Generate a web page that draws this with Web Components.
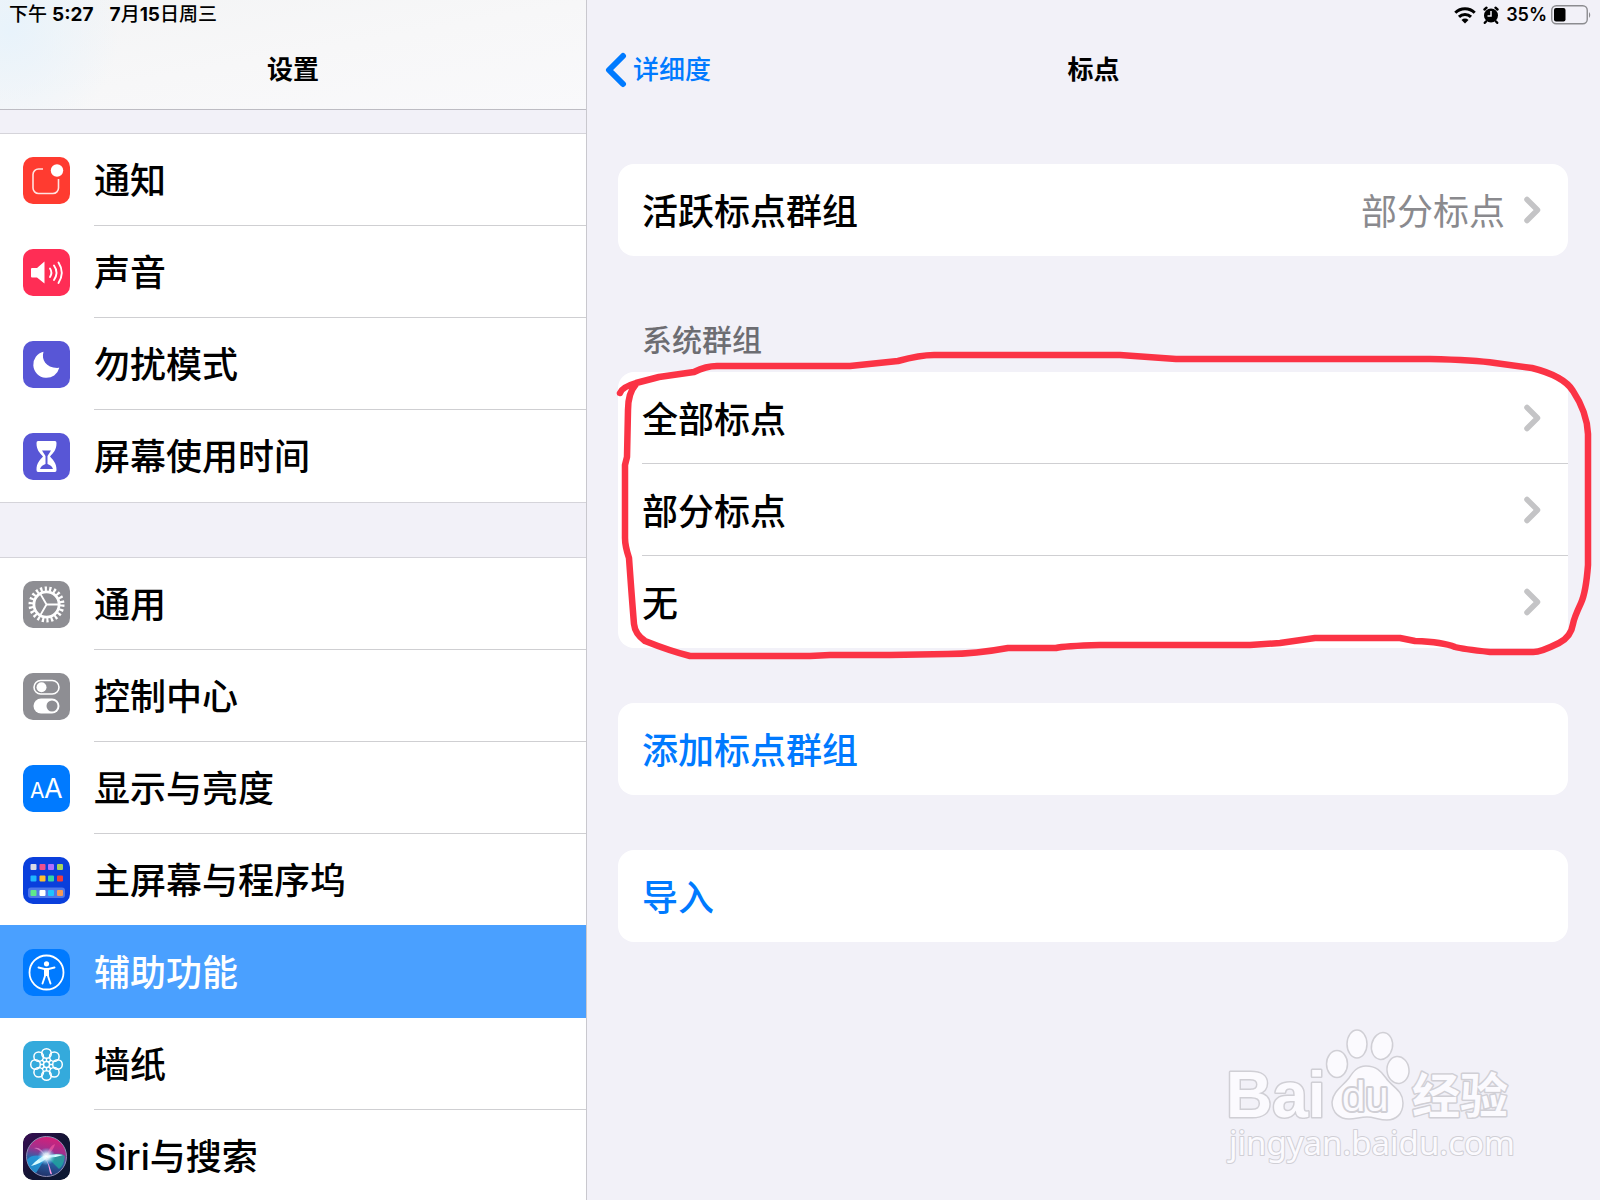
<!DOCTYPE html>
<html lang="zh-CN">
<head>
<meta charset="utf-8">
<meta name="viewport" content="width=device-width, initial-scale=1">
<title>设置</title>
<style>
  body {
    margin: 0;
    background: #f2f1f8;
    color: #000;
    font-family: Inter, "Noto Sans CJK SC", sans-serif;
    font-weight: 500;
  }
</style>
</head>
<body>
<settings-shell>
  <nav-header slot="side" class="side" tinted>
    <span slot="status">下午 <b>5:27</b></span>
    <span slot="status"><b>7</b>月<b>15</b>日周三</span>
    设置
  </nav-header>

  <menu-group slot="side">
    <menu-item label="通知" color="#ff3b30">
      <svg viewBox="0 0 47 47"><path d="M20 12h-4.500a5.500 5.500 0 0 0-5.500 5.500v13.500a5.500 5.500 0 0 0 5.500 5.500h14.500a5.500 5.500 0 0 0 5.500-5.500v-9" fill="none" stroke="#ffe3e0" stroke-width="1.600"/><circle cx="34" cy="13.500" r="6.200" fill="#fff"/></svg>
    </menu-item>
    <menu-item label="声音" color="#ff2d55">
      <svg viewBox="0 0 47 47"><path d="M9 19h5l7.500-6.500v22L14 28.500H9q-1 0-1-1v-7.500q0-1 1-1z" fill="#fff"/><g fill="none" stroke="#fff" stroke-width="1.900" stroke-linecap="round"><path d="M27 19.500q2.800 4.200 0 8.500"/><path d="M31 16.500q5 7 0 14.500"/><path d="M35.500 13.500q6.500 10 0 20.500"/></g></svg>
    </menu-item>
    <menu-item label="勿扰模式" color="#5856d6">
      <svg viewBox="0 0 47 47"><path d="M20.500 10.800c-2.500 8.500 3 17 15.800 16A13.200 13.200 0 1 1 20.500 10.800z" fill="#fff"/></svg>
    </menu-item>
    <menu-item label="屏幕使用时间" color="#5856d6">
      <svg viewBox="0 0 47 47"><path d="M15 8h17q1.500 0 1.500 2c0 7-3 9.500-6.500 13.500 3.500 4 6.500 6.500 6.500 13.500q0 2-1.500 2H15q-1.500 0-1.500-2c0-7 3-9.500 6.500-13.500-3.500-4-6.500-6.500-6.500-13.500q0-2 1.500-2z" fill="#fff"/><path d="M19 17.500h9l-3.500 5.500v8q4.500 1.500 5.500 5h-13q1-3.500 5.500-5v-8z" fill="#5856d6"/></svg>
    </menu-item>
  </menu-group>

  <menu-group slot="side" spaced>
    <menu-item label="通用" color="#8e8e93">
      <svg viewBox="0 0 47 47" fill="none" stroke="#fff"><circle cx="23.500" cy="23.500" r="15.700" stroke-width="4.600" stroke-dasharray="2.200 2.284"/><circle cx="23.500" cy="23.500" r="12.600" stroke-width="2.800"/><path d="M23.500 23.500h12M23.500 23.500l-6-10.400M23.500 23.500l-6 10.400" stroke-width="1.900"/></svg>
    </menu-item>
    <menu-item label="控制中心" color="#8e8e93">
      <svg viewBox="0 0 47 47"><rect x="11" y="7.500" width="25" height="13.500" rx="6.750" fill="none" stroke="#fff" stroke-width="1.600"/><circle cx="18.500" cy="14.300" r="5" fill="#fff"/><rect x="10.500" y="25.500" width="26" height="15" rx="7.500" fill="#fff"/><circle cx="29" cy="33" r="5.500" fill="#8e8e93"/></svg>
    </menu-item>
    <menu-item label="显示与亮度" color="#007aff">
      <svg viewBox="0 0 47 47" fill="#fff" font-family="Inter, sans-serif" font-weight="400"><text x="7" y="33" font-size="21">A</text><text x="21" y="33" font-size="27">A</text></svg>
    </menu-item>
    <menu-item label="主屏幕与程序坞" color="#0a3fdc" plain>
      <svg viewBox="0 0 47 47"><rect x="5" y="30.500" width="37" height="10.500" rx="3" fill="#4f78e8"/>
        <g><rect x="7.500" y="7" width="6" height="6" rx="1" fill="#d9dbe6"/><rect x="16.500" y="7" width="6" height="6" rx="1" fill="#f0508c"/><rect x="25" y="7" width="6" height="6" rx="1" fill="#b070ff"/><rect x="34" y="7" width="6" height="6" rx="1" fill="#a5d65a"/>
        <rect x="7.500" y="18.500" width="6" height="6" rx="1" fill="#1fb6ff"/><rect x="16.500" y="18.500" width="6" height="6" rx="1" fill="#ffc02e"/><rect x="25" y="18.500" width="6" height="6" rx="1" fill="#33d6a5"/><rect x="34" y="18.500" width="6" height="6" rx="1" fill="#f23c3c"/>
        <rect x="7.500" y="33" width="6" height="6" rx="1" fill="#5fe88a"/><rect x="16.500" y="33" width="6" height="6" rx="1" fill="#fff"/><rect x="25" y="33" width="6" height="6" rx="1" fill="#1fc3ff"/><rect x="34" y="33" width="6" height="6" rx="1" fill="#f79a55"/></g></svg>
    </menu-item>
    <menu-item label="辅助功能" color="#007aff" selected>
      <svg viewBox="0 0 47 47"><circle cx="23.500" cy="23.500" r="17" fill="none" stroke="#fff" stroke-width="1.800"/><circle cx="23.500" cy="14.800" r="2.600" fill="#fff"/><path d="M15.500 18.500l6 1.500h4l6-1.500M22 21v6l-2.500 7.500M25 21v6l2.500 7.500" fill="none" stroke="#fff" stroke-width="1.900" stroke-linecap="round"/><path d="M21 19.500h5v7.500h-5z" fill="#fff"/></svg>
    </menu-item>
    <menu-item label="墙纸" color="#34aadc">
      <svg viewBox="0 0 47 47" fill="none" stroke="#fff" stroke-width="1.500"><circle cx="23.500" cy="12.500" r="4.800"/><circle cx="31.300" cy="15.700" r="4.800"/><circle cx="34.500" cy="23.500" r="4.800"/><circle cx="31.300" cy="31.300" r="4.800"/><circle cx="23.500" cy="34.500" r="4.800"/><circle cx="15.700" cy="31.300" r="4.800"/><circle cx="12.500" cy="23.500" r="4.800"/><circle cx="15.700" cy="15.700" r="4.800"/><circle cx="23.500" cy="23.500" r="3"/><path d="M23.500 20.500v-3.200M23.500 26.500v3.200M20.500 23.500h-3.200M26.500 23.500h3.200M21.400 21.400l-2.300-2.300M25.600 25.600l2.300 2.300M25.600 21.400l2.300-2.300M21.400 25.600l-2.300 2.300"/></svg>
    </menu-item>
    <menu-item label="Siri与搜索" color="#17132f">
      <svg viewBox="0 0 47 47">
        <defs>
          <linearGradient id="bg" x2="1" y2="1"><stop offset="0" stop-color="#3a0d55"/><stop offset=".5" stop-color="#131433"/><stop offset="1" stop-color="#0c1a33"/></linearGradient>
          <linearGradient id="orb" x1=".6" y1="0" x2=".4" y2="1"><stop offset="0" stop-color="#d81f78"/><stop offset=".35" stop-color="#a0308e"/><stop offset=".6" stop-color="#2a64a8"/><stop offset="1" stop-color="#203068"/></linearGradient>
          <radialGradient id="glow"><stop offset="0" stop-color="#fff"/><stop offset=".35" stop-color="#e4faff" stop-opacity=".85"/><stop offset="1" stop-color="#59c8ff" stop-opacity="0"/></radialGradient>
        </defs>
        <rect width="47" height="47" rx="10" fill="url(#bg)"/>
        <circle cx="23.500" cy="23.500" r="20" fill="url(#orb)" stroke="#8f8fb5"/>
        <path d="M23 24Q9 20 4 27q2 10 9 13z" fill="#22a9e8" opacity=".7"/>
        <path d="M24 24q12-6 18-1-1 9-6 13z" fill="#1fae9d" opacity=".75"/>
        <path d="M23 24Q18 13 11 15q7 2 12 9z" fill="#f09bd8" opacity=".6"/>
        <path d="M23 24q3-11 9-13-1 6-9 13z" fill="#ff5fa5" opacity=".6"/>
        <path d="M22 24q5 8 7 17-1 1-2-1-1-8-5-16z" fill="#ff9ae6"/>
        <path d="M23 22Q15 25 8 33q9-2 16-8zM23 23q9-3 17-1-8 3-17 3z" fill="#d4fbff"/>
        <circle cx="23.500" cy="23.500" r="9" fill="url(#glow)"/>
      </svg>
    </menu-item>
  </menu-group>

  <nav-header back="详细度">
    <status-icons slot="status"></status-icons>
    标点
  </nav-header>

  <card-list>
    <setting-card>
      <setting-row label="活跃标点群组" value="部分标点" arrow></setting-row>
    </setting-card>
    <setting-card heading="系统群组">
      <setting-row label="全部标点" arrow line></setting-row>
      <setting-row label="部分标点" arrow line></setting-row>
      <setting-row label="无" arrow></setting-row>
      <pen-mark slot="over"></pen-mark>
    </setting-card>
    <setting-card>
      <setting-row label="添加标点群组" action></setting-row>
    </setting-card>
    <setting-card>
      <setting-row label="导入" action></setting-row>
    </setting-card>
  </card-list>

  <site-watermark slot="mark"></site-watermark>
</settings-shell>

<script>
/* base: shadow root with the element's own markup */
class BaseElement extends HTMLElement {
  constructor() {
    super();
    this.attachShadow({ mode: 'open' });
  }

  connectedCallback() {
    this.shadowRoot.innerHTML = this.render();
  }

  attr(name) {
    return this.getAttribute(name) || '';
  }
}

/* two columns: menu and detail */
class SettingsShell extends BaseElement {
  render() {
    return `
      <style>
        :host {
          display: grid;
          grid-template-columns: minmax(300px, 587px) minmax(0, 1fr);
          height: 100vh;
          position: relative;
          overflow: hidden;
        }
        aside {
          box-sizing: border-box;
          border-right: 1px solid #c9c8ce;
          overflow: hidden;
        }
        main {
          overflow: hidden;
        }
        .mark {
          position: absolute;
          right: 60px;
          bottom: 10px;
        }
      </style>
      <aside><slot name="side"></slot></aside>
      <main><slot></slot></main>
      <div class="mark"><slot name="mark"></slot></div>
    `;
  }
}

/* status line and title bar on top of a column */
class NavHeader extends BaseElement {
  render() {
    const back = this.attr('back');
    return `
      <style>
        :host {
          display: block;
          height: 109px;
          border-bottom: 1px solid transparent;
        }
        :host([tinted]) {
          background:
            radial-gradient(ellipse 110px 110px at 10px 30px, #e8f3fb, #e8f3fb00),
            linear-gradient(170deg, #f3f4f5, #f7f7f8 50%, #f9f9fb);
          border-bottom-color: #bdbcc3;
        }
        .status {
          display: flex;
          align-items: center;
          gap: 16px;
          height: 30px;
          padding: 0 9px;
          font-size: 19px;
          line-height: 30px;
        }
        ::slotted(status-icons) {
          margin-left: auto;
        }
        .bar {
          display: grid;
          grid-template-columns: 1fr auto 1fr;
          align-items: center;
          height: 79px;
          padding: 0 18px;
          font-size: 26px;
          line-height: 36px;
        }
        h1 {
          grid-column: 2;
          margin: 0;
          font-size: 26px;
          font-weight: 600;
        }
        a {
          display: flex;
          align-items: center;
          gap: 6px;
          color: #007aff;
          text-decoration: none;
        }
      </style>
      <div class="status"><slot name="status"></slot></div>
      <div class="bar">
        ${back ? `<a href="#"><svg width="22" height="36" viewBox="0 0 22 36" fill="none" stroke="#007aff" stroke-width="6" stroke-linecap="round" stroke-linejoin="round"><path d="M18 4L4 18l14 14"/></svg>${back}</a>` : ''}
        <h1><slot></slot></h1>
      </div>
    `;
  }
}

/* wifi, alarm, battery */
class StatusIcons extends BaseElement {
  render() {
    return `
      <style>
        :host {
          display: flex;
          align-items: center;
          gap: 6px;
          font-size: 18px;
          font-weight: 600;
        }
        .level {
          display: flex;
          align-items: center;
          gap: 4px;
        }
        svg { display: block; }
      </style>
      <svg width="22" height="18" viewBox="0 0 22 18" fill="none" stroke="#000" stroke-width="3"><path d="M1.300 6.800a13.700 13.700 0 0 1 19.400 0M5 10.900a8.500 8.500 0 0 1 12 0"/><path d="M11 17.500l-3.500-3.600a5 5 0 0 1 7 0z" fill="#000" stroke="none"/></svg>
      <svg width="18" height="18" viewBox="0 0 18 18"><circle cx="9" cy="9.500" r="7" /><g stroke="#000" stroke-width="2.400" stroke-linecap="round"><path d="M2.500 3.500l2-1.800M15.500 3.500l-2-1.800M4 15.500l-1.200 1.300M14 15.500l1.200 1.300"/></g><path d="M9 5v5H5.500" stroke="#f2f1f8" stroke-width="1.500" fill="none"/></svg>
      <span class="level">35%
      <svg width="40" height="20" viewBox="0 0 40 20"><rect x=".75" y=".75" width="35.500" height="18" rx="4.500" fill="none" stroke="#8c8c90" stroke-width="1.400"/><rect x="3" y="3" width="11.500" height="13.500" rx="2" /><path d="M38 7q2.500 3 0 6z" fill="#8c8c90"/></svg></span>
    `;
  }
}

class MenuGroup extends BaseElement {
  render() {
    return `
      <style>
        :host {
          display: block;
          margin-top: 24px;
          background: #fff;
          box-shadow: 0 -1px #d5d4da, 0 1px #d5d4da;
        }
        :host([spaced]) { margin-top: 56px; }
      </style>
      <slot></slot>
    `;
  }
}

class MenuItem extends BaseElement {
  render() {
    return `
      <style>
        :host {
          display: block;
          --line: #cfcfd2;
        }
        :host(:last-child), :host([plain]) { --line: transparent; }
        :host([selected]) {
          --line: #4aa0ff;
          background: #4aa0ff;
          box-shadow: 0 -1px #4aa0ff;
        }
        a {
          display: flex;
          align-items: center;
          gap: 24px;
          height: 92px;
          padding-left: 23px;
          color: #000;
          text-decoration: none;
          font-size: 36px;
        }
        :host([selected]) a { color: #fff; }
        .icon {
          display: grid;
          width: 47px;
          height: 47px;
          border-radius: 10px;
          overflow: hidden;
          background: ${this.attr('color')};
        }
        .text {
          flex: 1;
          box-sizing: border-box;
          height: 92px;
          line-height: 94px;
          border-bottom: 1px solid var(--line);
          white-space: nowrap;
        }
      </style>
      <a href="#"><span class="icon"><slot></slot></span><span class="text">${this.attr('label')}</span></a>
    `;
  }
}

class CardList extends BaseElement {
  render() {
    return `
      <style>
        :host {
          display: flex;
          flex-direction: column;
          gap: 55px;
          padding: 54px 32px 54px 31px;
        }
      </style>
      <slot></slot>
    `;
  }
}

/* white rounded card, optional heading above */
class SettingCard extends BaseElement {
  render() {
    const heading = this.attr('heading');
    return `
      <style>
        :host { display: block; }
        h2 {
          margin: 0;
          padding: 11px 24px 14px;
          font-size: 30px;
          line-height: 36px;
          font-weight: 500;
          color: #6d6d72;
        }
        .card {
          position: relative;
          background: #fff;
          border-radius: 16px;
        }
      </style>
      ${heading ? `<h2>${heading}</h2>` : ''}
      <div class="card"><slot></slot><slot name="over"></slot></div>
    `;
  }
}

class SettingRow extends BaseElement {
  render() {
    const label = this.attr('label');
    const tag = this.hasAttribute('action') ? 'button type="button"' : 'a href="#"';
    const end = this.hasAttribute('action') ? 'button' : 'a';
    return `
      <style>
        :host {
          display: block;
          padding-left: 24px;
        }
        a, button {
          display: flex;
          align-items: center;
          box-sizing: border-box;
          width: 100%;
          height: 92px;
          padding: 0 27px 0 0;
          border: 0;
          border-bottom: 1px solid transparent;
          background: none;
          color: #000;
          font: inherit;
          font-size: 36px;
          text-align: left;
          text-decoration: none;
        }
        button { color: #007aff; }
        :host([line]) a { border-bottom-color: #cfcfd2; }
        .label, .value { padding-bottom: 2px; }
        .label { flex: 1; }
        .value {
          color: #8a8a8e;
          font-weight: 400;
        }
        svg { margin-left: 18px; }
      </style>
      <${tag}>
        <span class="label">${label}</span>
        <span class="value">${this.attr('value')}</span>
        ${this.hasAttribute('arrow') ? '<svg width="18" height="28" viewBox="0 0 18 28" fill="none" stroke="#c4c4c6" stroke-width="5.500" stroke-linecap="round" stroke-linejoin="round"><path d="M4 3.500l10.500 10.500L4 24.500"/></svg>' : ''}
      </${end}>
    `;
  }
}

/* hand drawn red loop over the card */
class PenMark extends BaseElement {
  render() {
    return `
      <style>
        :host {
          position: absolute;
          inset: 0;
          pointer-events: none;
        }
        svg {
          display: block;
          width: 100%;
          height: 100%;
          overflow: visible;
        }
      </style>
      <svg viewBox="618 372 950 276" preserveAspectRatio="none" fill="none" stroke="#fb3345" stroke-width="6.500" stroke-linecap="round" stroke-linejoin="round">
        <path d="M620 393Q622 387 636 383L659 377L694 372Q706 366 717 366L850 366L898 361Q920 355 934 355L1120 355L1176 359L1430 359Q1475 360 1495 363L1532 368Q1564 376 1573 391Q1587 412 1588 434L1588 565Q1586 592 1581 603Q1574 618 1573 624Q1571 637 1559 643Q1539 653 1532 652L1490 652Q1462 649 1455 647Q1443 642 1415 641L1400 638L1315 638L1280 643L1250 645L1100 645Q1064 646 1056 648L1008 648Q975 654 948 654L890 655L830 655L810 656L690 656Q670 651 645 641Q635 634 634 624Q632 600 629 558Q625 546 625 538L625 465L627 457L628 410Q628 393 636 384"/>
      </svg>
    `;
  }
}

class SiteWatermark extends BaseElement {
  render() {
    return `
      <style>
        :host { display: block; }
        svg { display: block; overflow: visible; }
        text { paint-order: stroke; }
      </style>
      <svg width="340" height="180" viewBox="0 0 340 180" fill="#fbfafe" stroke="#d0cfd5" stroke-width="3" stroke-linejoin="round">
        <text x="26" y="107" font-family="Liberation Sans, sans-serif" font-size="64" font-weight="700">Bai</text>
        <ellipse cx="137" cy="54" rx="10.500" ry="13.500" stroke-width="1.500"/>
        <ellipse cx="157" cy="34" rx="10" ry="14" stroke-width="1.500"/>
        <ellipse cx="182" cy="36" rx="10.500" ry="13.500" stroke-width="1.500" transform="rotate(12 182 36)"/>
        <ellipse cx="198" cy="60" rx="11" ry="13.500" stroke-width="1.500" transform="rotate(-6 198 60)"/>
        <path d="M166 56c-9 0-13 6-17 12-6 8-16 13-17 24 0 11 8 17 17 17 7 0 11-2 18-2s12 3 20 3c9 0 16-6 16-17 0-13-11-16-17-25-5-7-10-12-20-12z" stroke-width="1.500"/>
        <text x="142" y="101" font-family="Liberation Sans, sans-serif" font-size="42" stroke-width="4">du</text>
        <text x="212" y="103" font-family="Noto Sans CJK SC, sans-serif" font-size="48" font-weight="700">经验</text>
        <text x="29" y="145" font-family="Noto Sans, sans-serif" font-size="33" font-weight="400" stroke-width="2">jingyan.baidu.com</text>
      </svg>
    `;
  }
}

customElements.define('settings-shell', SettingsShell);
customElements.define('nav-header', NavHeader);
customElements.define('status-icons', StatusIcons);
customElements.define('menu-group', MenuGroup);
customElements.define('menu-item', MenuItem);
customElements.define('card-list', CardList);
customElements.define('setting-card', SettingCard);
customElements.define('setting-row', SettingRow);
customElements.define('pen-mark', PenMark);
customElements.define('site-watermark', SiteWatermark);
</script>
</body>
</html>
